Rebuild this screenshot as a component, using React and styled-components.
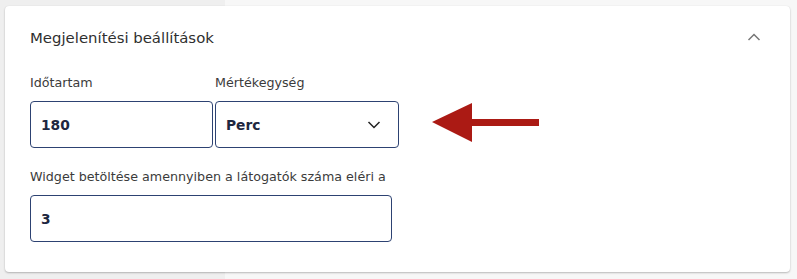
import styled, { createGlobalStyle } from 'styled-components';

const GlobalStyle = createGlobalStyle`
  html, body {
    margin: 0;
    padding: 0;
  }
  body {
    width: 797px;
    height: 279px;
    overflow: hidden;
    background: linear-gradient(to right, #efefef 225px, #f7f7f7 225px);
    font-family: 'DejaVu Sans', 'Noto Sans', sans-serif;
  }
`;

const Page = styled.div`
  padding: 6px 7px 0 5px;
`;

const Card = styled.section`
  background: #fff;
  border-radius: 4px;
  box-shadow: 0 1px 2px rgba(0, 0, 0, 0.25), 0 0 1px rgba(0, 0, 0, 0.08);
  padding: 21px 25px 29px 25px;
  height: 266px;
  box-sizing: border-box;
`;

const Header = styled.div`
  display: flex;
  align-items: center;
  justify-content: space-between;
  height: 22px;
  margin-bottom: 26px;
`;

const Title = styled.h2`
  margin: 0;
  font-size: 14.9px;
  font-weight: 400;
  color: #2f2f2f;
`;

const Collapse = styled.button`
  border: 0;
  background: none;
  padding: 0;
  margin-right: 4px;
  margin-top: -2px;
  display: flex;
  cursor: pointer;
`;

const Row = styled.div`
  display: flex;
  align-items: flex-end;
  gap: 2px;
  margin-bottom: 21px;
`;

const Field = styled.label`
  display: flex;
  flex-direction: column;
  width: ${(p) => p.$width}px;
`;

const Label = styled.span`
  font-size: 12.7px;
  color: #3b3b3b;
  line-height: 16px;
  margin-bottom: 10px;
`;

const Box = styled.div`
  height: 47px;
  box-sizing: border-box;
  border: 1px solid #2d4272;
  border-radius: 4px;
  display: flex;
  align-items: center;
  justify-content: space-between;
  padding: 0 17px 0 10px;
  font-size: 13.8px;
  font-weight: 700;
  color: #1e2740;
`;

const Arrow = styled.svg`
  margin-left: 31px;
  margin-bottom: 5px;
`;

const Chevron = ({ up }) => (
  <svg width="14" height="8" viewBox="0 0 14 8" fill="none">
    <path
      d={up ? 'M1.5 7L7 1.5L12.5 7' : 'M1.5 1L7 6.5L12.5 1'}
      stroke={up ? '#777' : '#222'}
      strokeWidth="1.5"
    />
  </svg>
);

export default function App() {
  return (
    <>
      <GlobalStyle />
      <Page>
        <Card>
          <Header>
            <Title>Megjelenítési beállítások</Title>
            <Collapse aria-label="Összecsukás">
              <Chevron up />
            </Collapse>
          </Header>
          <Row>
            <Field $width={183}>
              <Label>Időtartam</Label>
              <Box>180</Box>
            </Field>
            <Field $width={184}>
              <Label>Mértékegység</Label>
              <Box>
                Perc
                <Chevron />
              </Box>
            </Field>
            <Arrow width="107" height="40" viewBox="0 0 107 40">
              <polygon points="0,19 40,0 40,16 107,16 107,23 40,23 40,39" fill="#ab1a14" />
            </Arrow>
          </Row>
          <Field $width={362}>
            <Label>Widget betöltése amennyiben a látogatók száma eléri a</Label>
            <Box>3</Box>
          </Field>
        </Card>
      </Page>
    </>
  );
}
